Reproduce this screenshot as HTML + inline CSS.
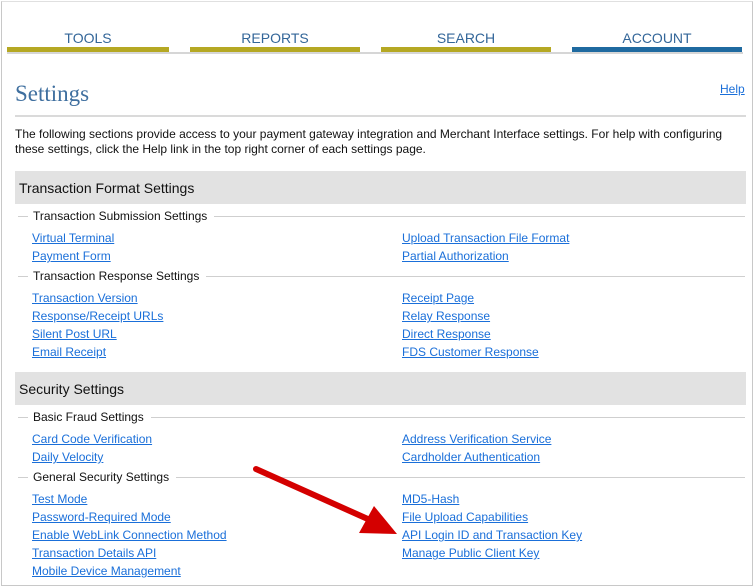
<!DOCTYPE html>
<html><head><style>
body{margin:0;width:754px;height:588px;background:#fff;font-family:"Liberation Sans",Arial,sans-serif;position:relative;overflow:hidden}
.frame{position:absolute;left:1px;top:1px;width:750px;height:583px;border:1px solid #c8c8c8;border-top-color:#e0e0e0}
.tab{position:absolute;top:30px;height:17px;border-bottom:5px solid #b5a823;color:#336699;font-size:14px;text-align:center;line-height:16px}
.gl{position:absolute;left:7px;width:736px;top:52px;height:2px;background:#d6d6d6}
h1{position:absolute;left:15px;top:81px;margin:0;font-family:"Liberation Serif",serif;font-weight:normal;font-size:23px;color:#3f6f9f}
.help{position:absolute;left:720px;top:82px;font-size:12px;color:#1a6fd9;text-decoration:underline}
.sep{position:absolute;left:15px;width:731px;top:115px;height:2px;background:#dadada}
p{position:absolute;left:15px;top:127px;width:730px;margin:0;font-size:12px;line-height:15px;color:#111}
.band{position:absolute;left:15px;width:731px;height:33px;background:#e2e2e2;font-size:14px;line-height:34px;text-indent:4px;color:#111}
.leg{position:absolute;left:18px;width:727px;height:1px;background:#cfcfcf}
.leg span{position:absolute;left:10px;top:-7px;background:#fff;padding:0 7px 0 5px;font-size:12px;color:#111}
a{position:absolute;font-size:12px;color:#1a6fd9;text-decoration:underline;line-height:14px}
</style></head><body>
<div class="frame"></div>
<div class="gl"></div>
<div class="tab" style="left:7px;width:162px">TOOLS</div>
<div class="tab" style="left:190px;width:170px">REPORTS</div>
<div class="tab" style="left:381px;width:170px">SEARCH</div>
<div class="tab" style="left:572px;width:170px;border-bottom-color:#1f6aa0">ACCOUNT</div>
<h1>Settings</h1>
<div class="help">Help</div>
<div class="sep"></div>
<p>The following sections provide access to your payment gateway integration and Merchant Interface settings. For help with configuring these settings, click the Help link in the top right corner of each settings page.</p>
<div class="band" style="top:171px">Transaction Format Settings</div>
<div class="leg" style="top:216px"><span>Transaction Submission Settings</span></div>
<a style="left:32px;top:231px">Virtual Terminal</a><a style="left:402px;top:231px">Upload Transaction File Format</a>
<a style="left:32px;top:249px">Payment Form</a><a style="left:402px;top:249px">Partial Authorization</a>
<div class="leg" style="top:276px"><span>Transaction Response Settings</span></div>
<a style="left:32px;top:291px">Transaction Version</a><a style="left:402px;top:291px">Receipt Page</a>
<a style="left:32px;top:309px">Response/Receipt URLs</a><a style="left:402px;top:309px">Relay Response</a>
<a style="left:32px;top:327px">Silent Post URL</a><a style="left:402px;top:327px">Direct Response</a>
<a style="left:32px;top:345px">Email Receipt</a><a style="left:402px;top:345px">FDS Customer Response</a>
<div class="band" style="top:372px">Security Settings</div>
<div class="leg" style="top:417px"><span>Basic Fraud Settings</span></div>
<a style="left:32px;top:432px">Card Code Verification</a><a style="left:402px;top:432px">Address Verification Service</a>
<a style="left:32px;top:450px">Daily Velocity</a><a style="left:402px;top:450px">Cardholder Authentication</a>
<div class="leg" style="top:477px"><span>General Security Settings</span></div>
<a style="left:32px;top:492px">Test Mode</a><a style="left:402px;top:492px">MD5-Hash</a>
<a style="left:32px;top:510px">Password-Required Mode</a><a style="left:402px;top:510px">File Upload Capabilities</a>
<a style="left:32px;top:528px">Enable WebLink Connection Method</a><a style="left:402px;top:528px">API Login ID and Transaction Key</a>
<a style="left:32px;top:546px">Transaction Details API</a><a style="left:402px;top:546px">Manage Public Client Key</a>
<a style="left:32px;top:564px">Mobile Device Management</a>
<svg style="position:absolute;left:0;top:0" width="754" height="588">
<line x1="256" y1="469" x2="370" y2="520" stroke="#d40000" stroke-width="6" stroke-linecap="round"/>
<polygon points="397,534 359,533 374,506" fill="#d40000"/>
</svg>
</body></html>
